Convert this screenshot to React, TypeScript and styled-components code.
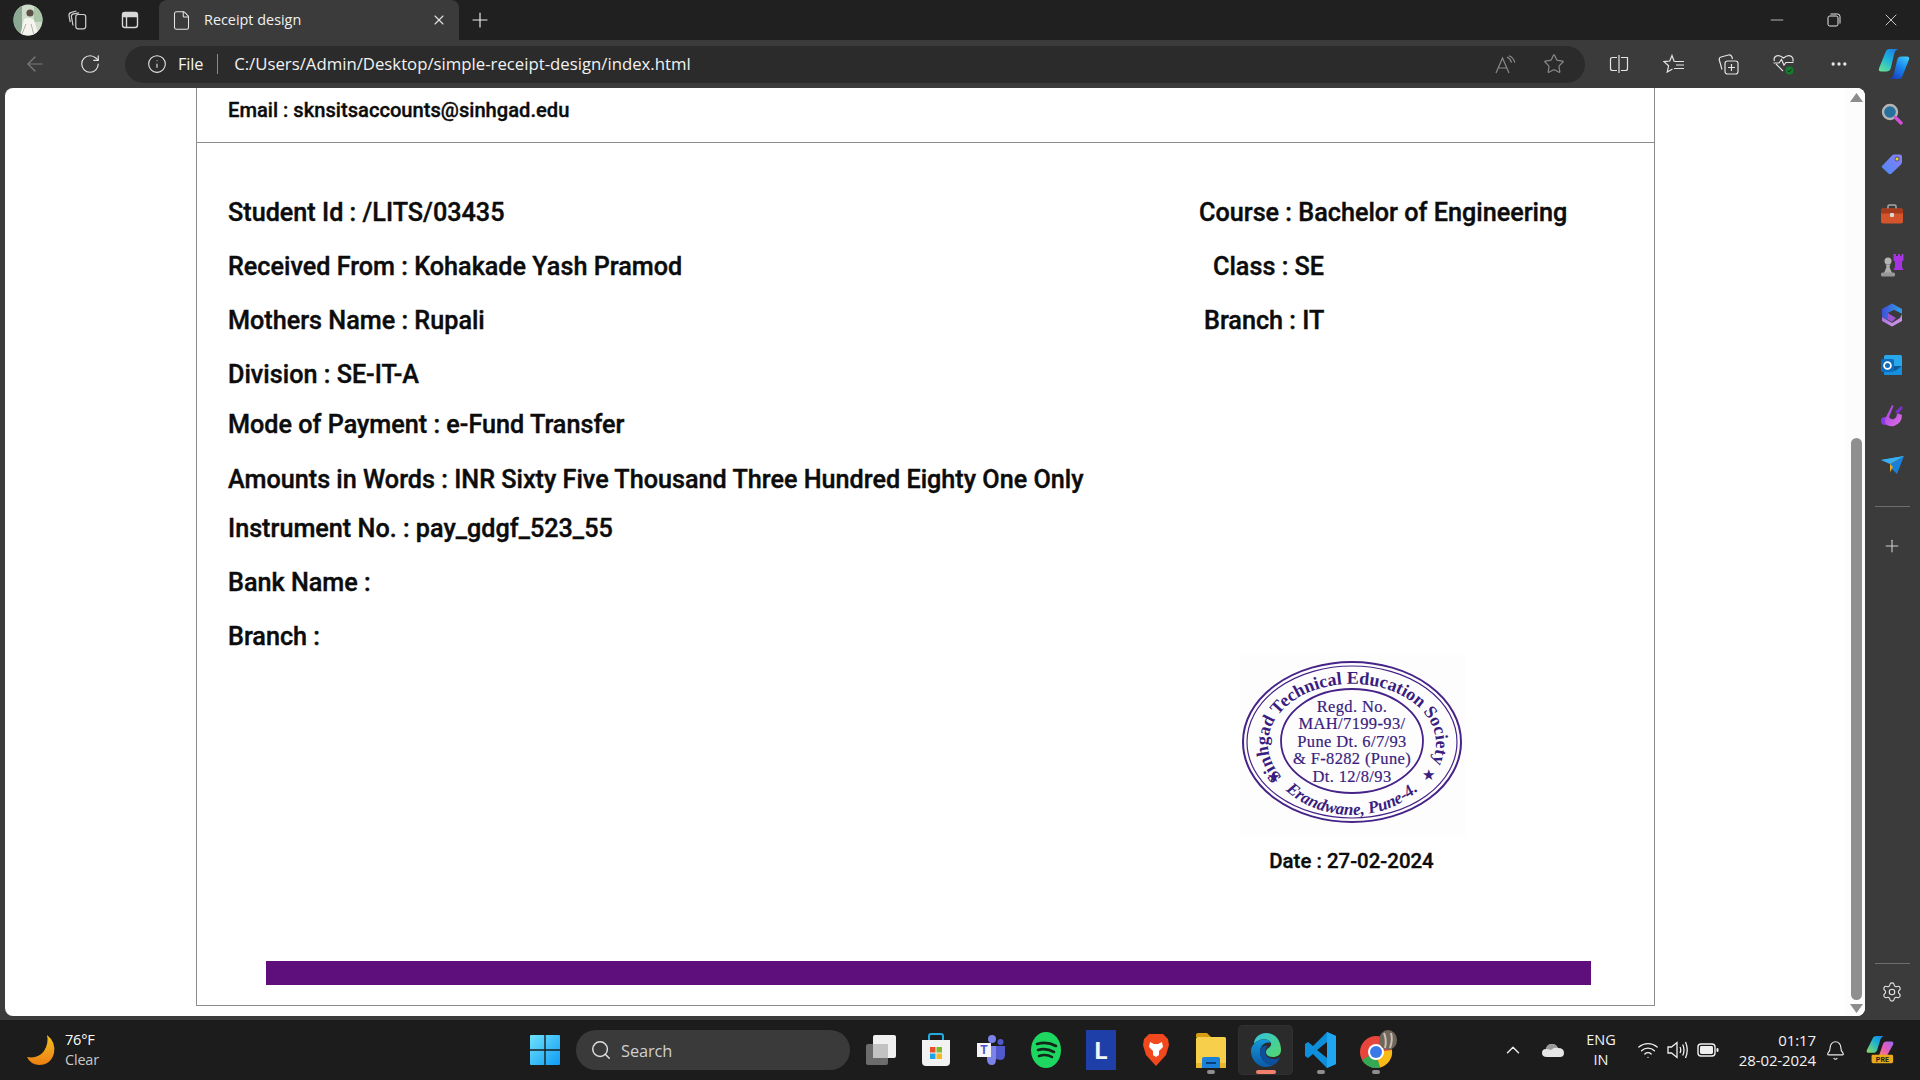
import React from "react";
import styled, { createGlobalStyle } from "styled-components";
import {
  ArrowLeft, RotateCw, Info, Star, Plus, X, Minus, ChevronUp, Bell, Settings,
  Wifi, Search, Ellipsis, File as FileGlyph,
} from "lucide-react";

const Global = createGlobalStyle`
  html, body { margin: 0; padding: 0; background: #1c1c1c; }
  * { box-sizing: border-box; }
  #root { width: 1920px; height: 1080px; overflow: hidden; }
`;

const Screen = styled.div`
  width: 1920px; height: 1080px; display: flex; flex-direction: column;
  font-family: "Open Sans", "Noto Sans", sans-serif; color: #fff; background: #3b3b3b;
`;

/* ---- title bar ---- */
const TitleBar = styled.div`
  height: 40px; background: #202020; display: flex; align-items: center; flex: none;
`;
const TitleSlot = styled.div<{ $w: number }>`
  width: ${(p) => p.$w}px; height: 40px; display: flex; align-items: center; justify-content: center; flex: none;
`;
const Tab = styled.div`
  width: 300px; height: 40px; background: #3b3b3b; border-radius: 8px 8px 0 0;
  display: flex; align-items: center; padding: 0 12px 0 12px; flex: none;
`;
const TabTitle = styled.span`
  font-size: 14.4px; margin: 0 0 2px 12px; flex: 1; color: #f0f0f0; letter-spacing: 0;
`;
const WindowControls = styled.div`
  margin-left: auto; display: flex; align-items: center; height: 40px; padding-right: 1px;
`;
const WinBtn = styled.div`
  width: 57px; height: 40px; display: flex; align-items: center; justify-content: center;
`;

/* ---- toolbar ---- */
const Toolbar = styled.div`
  height: 48px; background: #3b3b3b; display: flex; align-items: center; padding-left: 7px; flex: none;
`;
const ToolBtn = styled.div<{ $w?: number }>`
  width: ${(p) => p.$w ?? 55}px; height: 48px; display: flex; align-items: center; justify-content: center; flex: none;
`;
const AddressBar = styled.div`
  width: 1460px; height: 37px; margin: 0 6px 0 8px; border-radius: 19px; background: #2b2b2b;
  display: flex; align-items: center; padding-left: 22px; flex: none;
`;
const FileLabel = styled.span`
  font-size: 16.4px; margin: 0 0 2px 11px; color: #f2f2f2; letter-spacing: -0.2px;
`;
const Sep = styled.span`
  width: 1px; height: 20px; background: #8a8a8a; margin: 0 16px 0 14px;
`;
const Url = styled.span`
  font-size: 16.75px; margin-bottom: 2px; color: #f2f2f2; letter-spacing: 0; flex: 1; white-space: nowrap;
`;
const AddressEnd = styled.div`
  display: flex; align-items: center; gap: 27px; padding-right: 20px;
`;

/* ---- main ---- */
const Main = styled.div`
  flex: 1; display: flex; padding-left: 5px; padding-bottom: 4px; min-height: 0;
`;
const Page = styled.div`
  width: 1860px; background: #fff; border-radius: 8px; display: flex; overflow: hidden; flex: none; color: #0c0c0c;
  font-family: Roboto, "Liberation Sans", sans-serif;
`;
const Viewport = styled.div`
  flex: 1; padding-left: 191px; min-width: 0;
`;
const Receipt = styled.div`
  width: 1459px; height: 918px; border: 1px solid #8c8c8c; border-top: 0; background: #fff;
`;
const EmailBar = styled.div`
  height: 55px; border-bottom: 1px solid #8c8c8c; padding: 6px 0 0 31px;
  font-size: 20.15px; font-weight: 500; line-height: 32px; -webkit-text-stroke: 0.35px #0c0c0c;
`;
const Body = styled.div`
  padding: 55px 0 0 31px;
`;
const Line = styled.div<{ $gap?: number }>`
  display: flex; height: 30px; line-height: 30px; margin-top: ${(p) => p.$gap ?? 24}px;
  font-size: 25.2px; font-weight: 500; white-space: nowrap; -webkit-text-stroke: 0.4px #0c0c0c;
  &:first-child { margin-top: 0; }
`;
const LeftCell = styled.div`
  width: 971px; flex: none;
`;
const RightCell = styled.div<{ $indent?: number }>`
  padding-left: ${(p) => p.$indent ?? 0}px;
`;
const Signature = styled.div`
  width: 226px; margin: 3px 0 0 1012px; display: flex; flex-direction: column; align-items: center;
`;
const StampSvg = styled.svg`
  width: 226px; height: 180px; display: block; background: #fefdfe;
`;
const DateText = styled.div`
  margin: 13px 3px 0 0; height: 26px; line-height: 26px; font-size: 20.45px; font-weight: 500; white-space: nowrap;
  -webkit-text-stroke: 0.35px #0c0c0c;
`;
const PurpleBar = styled.div`
  width: 1325px; height: 24px; margin: 87px 0 0 38px; background: #5f0f7c;
`;

const ScrollCol = styled.div`
  width: 19px; flex: none; background: #fcfcfc; display: flex; flex-direction: column; align-items: center;
  padding: 5px 0 3px 1px; margin-left: auto;
`;
const ScrollSpacer = styled.div`
  height: 336px; flex: none;
`;
const Thumb = styled.div`
  width: 11px; flex: 1; background: #8f8f8f; border-radius: 6px; margin-bottom: 4px;
`;

/* ---- sidebar ---- */
const SideBar = styled.div`
  width: 55px; flex: none; display: flex; flex-direction: column; align-items: center; padding: 1px 1px 0 0;
`;
const SideIcon = styled.div`
  width: 50px; height: 50.2px; flex: none; display: flex; align-items: center; justify-content: center;
`;
const SideRule = styled.div`
  width: 35px; height: 1px; background: #6e6e6e; flex: none; margin-top: 15px;
`;
const SideAdd = styled.div`
  height: 40px; margin-top: 19px; display: flex; align-items: center; justify-content: center; flex: none;
`;
const SideGear = styled.div`
  margin-top: 13px; height: 30px; display: flex; align-items: center; justify-content: center; flex: none;
`;
const SideGap = styled.div`
  flex: 1;
`;
const SideFoot = styled.div`
  flex: 0 0 9px;
`;

/* ---- taskbar ---- */
const Taskbar = styled.div`
  height: 60px; background: #1c1c1c; flex: none; display: flex; align-items: center;
`;
const Weather = styled.div`
  width: 530px; flex: none; display: flex; align-items: center; padding-left: 26px;
`;
const WeatherText = styled.div`
  margin-left: 9px; font-size: 14.5px; line-height: 20px; letter-spacing: -0.2px;
`;
const WeatherSub = styled.div`
  color: #c8c8c8;
`;
const WinLogo = styled.div`
  width: 46px; flex: none; display: flex; align-items: center;
`;
const SearchPill = styled.div`
  width: 274px; height: 40px; border-radius: 20px; background: #3a3a3a; display: flex; align-items: center;
  padding-left: 14px; flex: none; margin-right: 3px;
`;
const SearchText = styled.span`
  font-size: 16.4px; color: #cfcfcf; margin-left: 9px; letter-spacing: -0.1px;
`;
const TaskIcon = styled.div<{ $active?: boolean }>`
  width: 55px; height: 50px; position: relative; display: flex; align-items: center; justify-content: center; flex: none;
  border-radius: 5px;
  ${(p) => p.$active && "background: #2b2b2b; box-shadow: inset 0 0 0 1px #303030;"}
`;
const Dot = styled.span<{ $color?: string; $w?: number }>`
  position: absolute; bottom: 1px; left: 50%; transform: translateX(-50%);
  width: ${(p) => p.$w ?? 8}px; height: 4px; border-radius: 2px; background: ${(p) => p.$color ?? "#8e8e8e"};
`;
const Tray = styled.div`
  margin-left: auto; display: flex; align-items: center; height: 60px; padding-right: 14px;
`;
const TraySlot = styled.div<{ $w: number }>`
  width: ${(p) => p.$w}px; display: flex; align-items: center; justify-content: center; flex: none;
`;
const LangText = styled.div`
  font-size: 14.5px; line-height: 20px; text-align: center; color: #f2f2f2;
`;
const Clock = styled.div`
  font-size: 15px; line-height: 20px; text-align: right; color: #f2f2f2; width: 92px; flex: none; letter-spacing: -0.1px;
`;

/* ---- drawings ---- */
const Avatar = () => (
  <svg width="30" height="32" viewBox="0 0 30 32">
    <clipPath id="av"><ellipse cx="15" cy="16" rx="14.5" ry="15.5" /></clipPath>
    <g clipPath="url(#av)">
      <rect width="30" height="32" fill="#cfdccb" />
      <rect x="0" width="9" height="32" fill="#8aa892" />
      <rect x="21" width="9" height="18" fill="#a9c4a6" />
      <circle cx="17" cy="9" r="3.6" fill="#5d4f45" />
      <path d="M7 32 L11 15 Q16 12 21 16 L26 32Z" fill="#f5f4ee" />
      <path d="M13 20 L9 30 M18 20 L21 31" stroke="#b4b2a6" strokeWidth="1" />
    </g>
  </svg>
);
const WorkspacesIcon = () => (
  <svg width="22" height="22" viewBox="0 0 20 20" fill="none" stroke="#d0d0d0" strokeWidth="1.1">
    <rect x="8" y="5" width="9" height="13" rx="2" />
    <path d="M5.5 15 L4 7 Q3.8 5 6 4.5 L11 3.5" />
    <path d="M3 12 L1.8 6 Q1.6 3.5 4 3 L8.5 1.8" />
  </svg>
);
const TabsIcon = () => (
  <svg width="20" height="20" viewBox="0 0 20 20" fill="none" stroke="#d8d8d8" strokeWidth="1.4">
    <rect x="2.5" y="2.5" width="15" height="15" rx="2.5" />
    <path d="M3 4 Q3 3 4 3 H16 Q17 3 17 4 V6.5 H3Z" fill="#d8d8d8" />
    <path d="M6.5 6.5 V17" />
  </svg>
);
const RestoreIcon = () => (
  <svg width="14" height="14" viewBox="0 0 14 14" fill="none" stroke="#e8e8e8" strokeWidth="1">
    <rect x="1" y="3" width="10" height="10" rx="1.8" />
    <path d="M3.5 1 H10.5 Q13 1 13 3.5 V10.5" />
  </svg>
);
const ReadAloud = () => (
  <svg width="21" height="19" viewBox="0 0 21 19" fill="none" stroke="#8a8a8a" strokeWidth="1.2">
    <path d="M1 18 L7.5 3 L14 18 M3.5 13 H11.5" />
    <path d="M12 2 Q15.5 3.5 16.5 7.5 M14 0.8 Q18.5 2.5 19.8 7.5" />
  </svg>
);
const SplitIcon = () => (
  <svg width="20" height="20" viewBox="0 0 20 20" fill="none" stroke="#e4e4e4" strokeWidth="1.2">
    <path d="M8 3.5 H3.5 Q1.5 3.5 1.5 5.5 V14.5 Q1.5 16.5 3.5 16.5 H8" />
    <path d="M12 3.5 H18.5 V14.5 Q18.5 16.5 16.5 16.5 H12" />
    <path d="M10 1 V19" />
  </svg>
);
const FavIcon = () => (
  <svg width="22" height="20" viewBox="0 0 22 20" fill="none" stroke="#e4e4e4" strokeWidth="1.2">
    <path d="M11.2 7.5 L9 1.5 L6.8 7 L1 7.6 L5.6 11.8 L4.2 18 L9.5 15" />
    <path d="M11.2 7.5 H21 M13 11 H21 M11 14.5 H21" />
  </svg>
);
const CollectionIcon = () => (
  <svg width="21" height="21" viewBox="0 0 21 21" fill="none" stroke="#e4e4e4" strokeWidth="1.2">
    <rect x="7" y="7" width="13" height="13" rx="2.5" />
    <path d="M13.5 10 V17 M10 13.5 H17" />
    <path d="M4 15.5 L1.3 6 Q0.8 3.6 3 3 L10.5 1 Q13 .6 14 3 L14.5 5" />
  </svg>
);
const HeartIcon = () => (
  <svg width="24" height="24" viewBox="0 0 24 24" fill="none">
    <path d="M11 19 L4 12 M2.4 9 Q1.4 6.5 3.4 4.5 Q7 2 11.5 6 Q16 2 19.5 4.5 Q21.8 6.5 20.8 9.5" stroke="#e4e4e4" strokeWidth="1.2" />
    <path d="M1.5 11 H7 L9.5 7.5 L12 13 L14 10.5 H21.5" stroke="#e4e4e4" strokeWidth="1.2" />
    <circle cx="17.5" cy="18.5" r="4" fill="#167d2f" />
    <path d="M15.7 18.6 L17 19.9 L19.4 17.3" stroke="#0b2d10" strokeWidth="1" />
  </svg>
);
const Copilot = ({ size = 32 }: { size?: number }) => (
  <svg width={size} height={size} viewBox="0 0 30 30">
    <defs>
      <linearGradient id="cp1" x1="0.2" y1="1" x2="0.8" y2="0">
        <stop offset="0" stopColor="#5fe09a" /><stop offset="0.5" stopColor="#1fb6d8" /><stop offset="1" stopColor="#1a7fe8" />
      </linearGradient>
      <linearGradient id="cp2" x1="0.2" y1="1" x2="0.8" y2="0">
        <stop offset="0" stopColor="#1640c0" /><stop offset="0.6" stopColor="#1a8cf0" /><stop offset="1" stopColor="#3cc4fa" />
      </linearGradient>
    </defs>
    <path d="M7 4 Q8 1 11 1 H19 Q16 2 15 6 L12 19 Q11 22 8 22 H3 Q0 22 1 19Z" fill="url(#cp1)" />
    <path d="M23 26 Q22 29 19 29 H11 Q14 28 15 24 L18 11 Q19 8 22 8 H27 Q30 8 29 11Z" fill="url(#cp2)" />
  </svg>
);
const CopilotPre = () => (
  <svg width="30" height="30" viewBox="0 0 32 30">
    <defs>
      <linearGradient id="cq1" x1="0" y1="1" x2="1" y2="0">
        <stop offset="0" stopColor="#8fdc5a" /><stop offset="0.6" stopColor="#18b0d8" /><stop offset="1" stopColor="#1a7fe8" />
      </linearGradient>
      <linearGradient id="cq2" x1="0" y1="1" x2="1" y2="0">
        <stop offset="0" stopColor="#f5a23c" /><stop offset="0.5" stopColor="#e85cb8" /><stop offset="1" stopColor="#a066f0" />
      </linearGradient>
    </defs>
    <path d="M8 3 Q9 0 12 0 H20 Q17 1 16 5 L13 15 Q12 18 9 18 H4 Q1 18 2 15Z" fill="url(#cq1)" />
    <path d="M24 20 Q23 23 20 23 H12 Q15 22 16 18 L19 9 Q20 6 23 6 H28 Q31 6 30 9Z" fill="url(#cq2)" />
    <rect x="7" y="20" width="23" height="9" rx="1.5" fill="#e8a91a" />
    <text x="18.5" y="27.4" fontSize="7.5" fontWeight="700" fontFamily="Roboto, sans-serif" fill="#1c1c1c" textAnchor="middle">PRE</text>
  </svg>
);

const SideSearch = () => (
  <svg width="22" height="22" viewBox="0 0 22 22">
    <circle cx="9" cy="9" r="7" fill="#25709c" stroke="#b4b4b4" strokeWidth="2.4" />
    <path d="M14.5 14.5 L20 20" stroke="#d44fd8" strokeWidth="3.4" strokeLinecap="round" />
  </svg>
);
const SideTag = () => (
  <svg width="22" height="22" viewBox="0 0 22 22">
    <defs><linearGradient id="tg" x1="0" y1="1" x2="1" y2="0"><stop offset="0" stopColor="#4c8bf5" /><stop offset="1" stopColor="#8a7cf5" /></linearGradient></defs>
    <path d="M1 13 L11 2.5 Q12 1.5 13.5 1.5 H19 Q21 1.5 21 3.5 V9 Q21 10.5 20 11.5 L10.5 20.5 Q9 22 7.5 20.5 L1 14.5 Q.3 13.7 1 13Z" fill="url(#tg)" />
    <circle cx="16" cy="6" r="2" fill="#f3d117" stroke="#1f2f6e" strokeWidth=".7" />
  </svg>
);
const SideBox = () => (
  <svg width="24" height="20" viewBox="0 0 24 20">
    <path d="M8 5 V2.5 Q8 1 9.5 1 H14.5 Q16 1 16 2.5 V5" fill="none" stroke="#a8a8a8" strokeWidth="1.6" />
    <rect x="1" y="4.5" width="22" height="15" rx="2" fill="#d4552c" />
    <rect x="1" y="4.5" width="22" height="5" rx="1.5" fill="#a53a1c" />
    <rect x="10" y="9" width="4" height="4" rx="1" fill="#d8d8d8" />
  </svg>
);
const SideChess = () => (
  <svg width="24" height="24" viewBox="0 0 24 24">
    <path d="M14 1 H16 V3 H18 V1 H20 V3 H21.5 V1 H23.5 V7 L22 9 V14 L23.5 17 H13.5 L15 14 V9 L13.5 7 V1Z" fill="#a634e0" />
    <circle cx="8" cy="8" r="3.5" fill="#b4b4b4" />
    <path d="M5.5 11.5 H10.5 L9.5 14 L12 20 H4 L6.5 14Z" fill="#adadad" />
    <rect x="1" y="19.5" width="14" height="4" rx="1.5" fill="#989898" />
  </svg>
);
const SideM365 = () => (
  <svg width="22" height="24" viewBox="0 0 22 24">
    <defs>
      <linearGradient id="ms1" x1="0" y1="0" x2="1" y2="0"><stop offset="0" stopColor="#3f51d8" /><stop offset="1" stopColor="#2f9fe8" /></linearGradient>
      <linearGradient id="ms2" x1="0" y1="0" x2="1" y2="1"><stop offset="0" stopColor="#a065e0" /><stop offset="1" stopColor="#d8a0e8" /></linearGradient>
    </defs>
    <path d="M1 6 L11 .5 L21 6 V11 L13 7 L7 10 V17 L1 14Z" fill="url(#ms1)" />
    <path d="M1 14 L11 20 L19 15 L21 11 V18 L11 23.5 L1 18Z" fill="url(#ms2)" />
    <path d="M7 10 L13 7 L21 11 L15 15 L7 11Z" fill="#3a3a3a" />
    <path d="M7 10 L7 17 L11 19 L15 15 L10 12Z" fill="#9a55d0" />
  </svg>
);
const SideOutlook = () => (
  <svg width="22" height="22" viewBox="0 0 22 22">
    <rect x="3" y="1" width="18" height="20" rx="1.5" fill="#28a8ea" />
    <path d="M3 12 H21 V20 Q21 21 20 21 H4 Q3 21 3 20Z" fill="#1490df" />
    <path d="M9 12 L21 12 L14 17Z" fill="#0a5a9c" />
    <rect x="0" y="5" width="13" height="13" rx="1.5" fill="#0f6cbd" />
    <circle cx="6.5" cy="11.5" r="3.4" fill="none" stroke="#fff" strokeWidth="1.8" />
  </svg>
);
const SideDrop = () => (
  <svg width="24" height="24" viewBox="0 0 24 24">
    <defs><linearGradient id="dp" x1="0" y1="0" x2="1" y2="1"><stop offset="0" stopColor="#a040e8" /><stop offset="1" stopColor="#e070e0" /></linearGradient></defs>
    <circle cx="5" cy="18" r="4" fill="#8a3ce0" />
    <path d="M5 16 L12 2 L13.5 3 L9 14 Q11 17 14 16 Q17 14.5 17 10 L22 12 Q22 20 14 23 Q8 24 5 20Z" fill="url(#dp)" />
    <path d="M15 9 L21 3 L23 5 L18 11Z" fill="#7a30c8" />
  </svg>
);
const SideSend = () => (
  <svg width="23" height="18" viewBox="0 0 23 18">
    <path d="M0 4 L23 0 L12 6Z" fill="#1f9bef" />
    <path d="M0 4 L9 8 L23 0Z" fill="#39b0f5" />
    <path d="M23 0 L9 8 L10 12Z" fill="#f5b21f" />
    <path d="M23 0 L16 18 L10 12 L9 16 L9 8Z" fill="#1a7fd8" />
    <path d="M9 8 L9 16 L12 11Z" fill="#f0a818" />
  </svg>
);

const Moon = () => (
  <svg width="30" height="32" viewBox="0 0 30 32">
    <defs><linearGradient id="mn" x1="0.5" y1="0" x2="0.5" y2="1"><stop offset="0" stopColor="#f2c21f" /><stop offset="1" stopColor="#ec7f14" /></linearGradient></defs>
    <path d="M21 1 Q30 8 28 19 Q25 31 13 31 Q4 30 1 23 Q12 25 18 17 Q23 9 21 1Z" fill="url(#mn)" />
  </svg>
);
const Windows = () => (
  <svg width="30" height="30" viewBox="0 0 30 30">
    <defs><linearGradient id="wn" x1="0" y1="0" x2="1" y2="1"><stop offset="0" stopColor="#6fe3fb" /><stop offset="1" stopColor="#0f9bf5" /></linearGradient></defs>
    <path d="M0 1 Q0 0 1 0 H14.3 V14.3 H0Z M15.7 0 H29 Q30 0 30 1 V14.3 H15.7Z M0 15.7 H14.3 V30 H1 Q0 30 0 29Z M15.7 15.7 H30 V29 Q30 30 29 30 H15.7Z" fill="url(#wn)" />
  </svg>
);
const TaskView = () => (
  <svg width="32" height="32" viewBox="0 0 32 32">
    <rect x="1" y="10" width="22" height="21" rx="2" fill="#6c6c6c" />
    <rect x="8" y="1" width="23" height="23" rx="2" fill="#f0f0f0" />
    <rect x="8" y="10" width="15" height="14" fill="#c2c2c2" />
  </svg>
);
const StoreIcon = () => (
  <svg width="30" height="34" viewBox="0 0 30 34">
    <path d="M8 8 V3 Q8 1 10 1 H20 Q22 1 22 3 V8" fill="none" stroke="#26a8e0" strokeWidth="2" />
    <path d="M1 7 H29 V29 Q29 33 25 33 H5 Q1 33 1 29Z" fill="#f2f2f2" />
    <rect x="9" y="14" width="5.5" height="5.5" fill="#e8502c" />
    <rect x="15.5" y="14" width="5.5" height="5.5" fill="#7fba2c" />
    <rect x="9" y="20.5" width="5.5" height="5.5" fill="#1fa3e8" />
    <rect x="15.5" y="20.5" width="5.5" height="5.5" fill="#f5b81f" />
  </svg>
);
const TeamsIcon = () => (
  <svg width="28" height="32" viewBox="0 0 28 32">
    <circle cx="15" cy="5" r="4" fill="#7b83eb" />
    <circle cx="23.5" cy="8" r="3" fill="#5059c9" />
    <path d="M10 12 H19 V25 Q19 31 15 31 Q10 31 10 25Z" fill="#7b83eb" />
    <path d="M19 12 H28 V21 Q28 26 23 26 L19 25Z" fill="#5059c9" />
    <rect x="0" y="9" width="14" height="14" fill="#f4f4f8" />
    <text x="7" y="20" fontSize="12" fontWeight="700" fontFamily="Roboto, sans-serif" fill="#4b53c8" textAnchor="middle">T</text>
  </svg>
);
const Spotify = () => (
  <svg width="30" height="36" viewBox="0 0 30 36">
    <ellipse cx="15" cy="18" rx="15" ry="18" fill="#1ed760" />
    <path d="M6 12 Q16 9 25 14 M7 18 Q15 15.5 23 20 M8 24 Q15 21.5 21 25" fill="none" stroke="#13261a" strokeWidth="2.6" strokeLinecap="round" />
  </svg>
);
const LIcon = () => (
  <svg width="30" height="40" viewBox="0 0 30 40">
    <rect width="30" height="40" fill="#1f3fa8" />
    <text x="15" y="29" fontSize="24" fontWeight="700" fontFamily="Roboto, sans-serif" fill="#f4f4f4" textAnchor="middle">L</text>
  </svg>
);
const Brave = () => (
  <svg width="28" height="34" viewBox="0 0 28 34">
    <path d="M7 1 H21 L26 6 L27 12 L24 22 L14 33 L4 22 L1 12 L2 6Z" fill="#f1481d" />
    <path d="M8 9 L12 11 H16 L20 9 L21 14 L17 18 V22 L14 24 L11 22 V18 L7 14Z" fill="#fff" />
  </svg>
);
const Folder = () => (
  <svg width="30" height="36" viewBox="0 0 30 36">
    <path d="M0 3 Q0 1 2 1 H11 L15 5 H0Z" fill="#d79e12" />
    <rect y="5" width="30" height="31" rx="1.5" fill="#f7cf4a" />
    <rect y="31" width="30" height="5" fill="#e8b82a" />
    <path d="M6 36 V27 Q6 25 8 25 H22 Q24 25 24 27 V36Z" fill="#1a80d8" />
    <rect x="10" y="30" width="10" height="2" fill="#0b3f78" />
  </svg>
);
const Edge = () => (
  <svg width="30" height="34" viewBox="0 0 30 34">
    <defs>
      <linearGradient id="ed1" x1="0" y1="0" x2="1" y2="1"><stop offset="0" stopColor="#32c4e0" /><stop offset="1" stopColor="#54d868" /></linearGradient>
      <linearGradient id="ed2" x1="0" y1="0" x2="0" y2="1"><stop offset="0" stopColor="#1598d8" /><stop offset="1" stopColor="#0b5aa8" /></linearGradient>
    </defs>
    <path d="M15 0 C25 0 30 8 30 17 C30 22 26 24 22 24 C18 24 15 22 15 19 C15 15 21 15 20 10 C18 5 8 5 3 11 C3 5 8 0 15 0Z" fill="url(#ed1)" />
    <path d="M3 11 C8 5 18 5 20 10 C14 8 9 13 9 19 C9 26 15 32 22 32 C19 34 17 34 15 34 C6 34 0 26 0 18 C0 15 1 13 3 11Z" fill="url(#ed2)" />
    <path d="M9 19 C9 26 15 32 22 32 C25 31 28 28 29 24 C26 27 18 27 15 22 C14 18 14 15 17 13 C12 12 9 15 9 19Z" fill="#0d4f9c" />
  </svg>
);
const VSCode = () => (
  <svg width="31" height="36" viewBox="0 0 31 36">
    <path d="M22 0 L31 4 V32 L22 36 L8 22 L3 26 L0 24 V12 L3 10 L8 14Z M22 10 L12 18 L22 26Z" fill="#0e8fdc" />
    <path d="M22 0 L31 4 V32 L22 36Z" fill="#1ea7f0" />
  </svg>
);
const Chrome = () => (
  <svg width="44" height="40" viewBox="-6 0 44 40">
    <circle cx="16" cy="22" r="16" fill="#e8453c" />
    <path d="M16 22 L2 30 A16 16 0 0 0 20 37.5Z" fill="#34a853" />
    <path d="M16 22 L32 20 A16 16 0 0 1 20 37.5Z" fill="#f9bc15" />
    <circle cx="16" cy="22" r="8" fill="#fff" />
    <circle cx="16" cy="22" r="6" fill="#3b78e7" />
    <ellipse cx="28" cy="10" rx="9" ry="10" fill="#6f675c" />
    <path d="M24 3 Q27 10 25 18 M31 3 Q33 10 30 18" stroke="#c8bfb0" strokeWidth="2" fill="none" />
  </svg>
);
const Cloud = () => (
  <svg width="22" height="16" viewBox="0 0 22 16">
    <path d="M5 15 Q0 15 0 11 Q0 7 4 7 Q5 2 10 2 Q14 2 16 6 Q22 6 22 11 Q22 15 18 15Z" fill="#e6e6e6" />
    <path d="M4 7 Q5 2 10 2 Q14 2 16 6 Q12 5 9 8 Q6 7 4 7Z" fill="#9a9a9a" />
  </svg>
);
const Volume = () => (
  <svg width="22" height="20" viewBox="0 0 22 20" fill="none" stroke="#f0f0f0" strokeWidth="1.3">
    <path d="M1 7 H4.5 L10 2.5 V17.5 L4.5 13 H1Z" />
    <path d="M13 7 Q14.5 10 13 13 M15.7 4.5 Q18.3 10 15.7 15.5 M18.5 2 Q22 10 18.5 18" />
  </svg>
);
const Battery = () => (
  <svg width="22" height="14" viewBox="0 0 22 14">
    <rect x="1" y="1" width="17" height="12" rx="3" fill="none" stroke="#f0f0f0" strokeWidth="1.4" />
    <rect x="3" y="3" width="13" height="8" rx="1.4" fill="#f0f0f0" />
    <rect x="19.5" y="5" width="2" height="4" rx="1" fill="#f0f0f0" />
  </svg>
);
const ArrowMark = ({ up }: { up?: boolean }) => (
  <svg width="13" height="9" viewBox="0 0 13 9">
    <path d={up ? "M6.5 0 L13 9 H0Z" : "M0 0 H13 L6.5 9Z"} fill="#8c8c8c" />
  </svg>
);

const Stamp = () => (
  <StampSvg viewBox="0 0 226 180">
    <defs>
      <path id="topArc" d="M42 122 A84 60 0 1 1 182 122" />
      <path id="botArc" d="M31 116 A88 72 0 0 0 193 116" />
    </defs>
    <g fill="none" stroke="#452388">
      <ellipse cx="112" cy="87" rx="109" ry="80" strokeWidth="2" />
      <ellipse cx="112" cy="87" rx="105" ry="76" strokeWidth="1.2" />
      <ellipse cx="112" cy="86" rx="71" ry="52" strokeWidth="1.8" />
    </g>
    <g fill="#3a1d80" fontFamily="'Liberation Serif', serif">
      <text fontSize="18" fontWeight="700">
        <textPath href="#topArc">Sinhgad Technical Education Society</textPath>
      </text>
      <text fontSize="17" fontWeight="700" fontStyle="italic" textAnchor="middle">
        <textPath href="#botArc" startOffset="50%">Erandwane, Pune-4.</textPath>
      </text>
      <text x="33" y="127" fontSize="15" textAnchor="middle">★</text>
      <text x="188" y="125" fontSize="15" textAnchor="middle">★</text>
      <g fontSize="16.5" letterSpacing="0.35" textAnchor="middle" stroke="#3a1d80" strokeWidth="0.2">
        <text x="112" y="57">Regd. No.</text>
        <text x="112" y="74">MAH/7199-93/</text>
        <text x="112" y="92">Pune Dt. 6/7/93</text>
        <text x="112" y="109">&amp; F-8282 (Pune)</text>
        <text x="112" y="127">Dt. 12/8/93</text>
      </g>
    </g>
  </StampSvg>
);

const taskIcons = [
  { el: <TaskView /> },
  { el: <StoreIcon /> },
  { el: <TeamsIcon /> },
  { el: <Spotify /> },
  { el: <LIcon /> },
  { el: <Brave /> },
  { el: <Folder />, dot: true },
  { el: <Edge />, active: true },
  { el: <VSCode />, dot: true },
  { el: <Chrome />, dot: true },
];

export default function App() {
  return (
    <Screen>
      <Global />
      <TitleBar>
        <TitleSlot $w={56}><Avatar /></TitleSlot>
        <TitleSlot $w={44}><WorkspacesIcon /></TitleSlot>
        <TitleSlot $w={59}><TabsIcon /></TitleSlot>
        <Tab>
          <FileGlyph size={21} color="#e4e4e4" strokeWidth={1.2} />
          <TabTitle>Receipt design</TabTitle>
          <X size={16} color="#e4e4e4" strokeWidth={1.6} />
        </Tab>
        <TitleSlot $w={42}><Plus size={24} color="#eaeaea" strokeWidth={1.2} /></TitleSlot>
        <WindowControls>
          <WinBtn><Minus size={20} color="#e8e8e8" strokeWidth={0.9} /></WinBtn>
          <WinBtn><RestoreIcon /></WinBtn>
          <WinBtn><X size={20} color="#e8e8e8" strokeWidth={1} /></WinBtn>
        </WindowControls>
      </TitleBar>

      <Toolbar>
        <ToolBtn><ArrowLeft size={24} color="#7d7d7d" strokeWidth={1.2} /></ToolBtn>
        <ToolBtn><RotateCw size={22} color="#e4e4e4" strokeWidth={1.3} /></ToolBtn>
        <AddressBar>
          <Info size={20} color="#e8e8e8" strokeWidth={1.3} />
          <FileLabel>File</FileLabel>
          <Sep />
          <Url>C:/Users/Admin/Desktop/simple-receipt-design/index.html</Url>
          <AddressEnd>
            <ReadAloud />
            <Star size={22} color="#8a8a8a" strokeWidth={1.3} />
          </AddressEnd>
        </AddressBar>
        <ToolBtn><SplitIcon /></ToolBtn>
        <ToolBtn><FavIcon /></ToolBtn>
        <ToolBtn><CollectionIcon /></ToolBtn>
        <ToolBtn><HeartIcon /></ToolBtn>
        <ToolBtn><Ellipsis size={20} color="#e8e8e8" strokeWidth={2} /></ToolBtn>
        <ToolBtn><Copilot /></ToolBtn>
      </Toolbar>

      <Main>
        <Page>
          <Viewport>
            <Receipt>
              <EmailBar>Email : sknsitsaccounts@sinhgad.edu</EmailBar>
              <Body>
                <Line>
                  <LeftCell>Student Id : /LITS/03435</LeftCell>
                  <RightCell>Course : Bachelor of Engineering</RightCell>
                </Line>
                <Line>
                  <LeftCell>Received From : Kohakade Yash Pramod</LeftCell>
                  <RightCell $indent={14}>Class : SE</RightCell>
                </Line>
                <Line>
                  <LeftCell>Mothers Name : Rupali</LeftCell>
                  <RightCell $indent={5}>Branch : IT</RightCell>
                </Line>
                <Line><LeftCell>Division : SE-IT-A</LeftCell></Line>
                <Line $gap={20}><LeftCell>Mode of Payment : e-Fund Transfer</LeftCell></Line>
                <Line $gap={25}><LeftCell>Amounts in Words : INR Sixty Five Thousand Three Hundred Eighty One Only</LeftCell></Line>
                <Line $gap={19}><LeftCell>Instrument No. : pay_gdgf_523_55</LeftCell></Line>
                <Line><LeftCell>Bank Name :</LeftCell></Line>
                <Line><LeftCell>Branch :</LeftCell></Line>
                <Signature>
                  <Stamp />
                  <DateText>Date : 27-02-2024</DateText>
                </Signature>
                <PurpleBar />
              </Body>
            </Receipt>
          </Viewport>
          <ScrollCol>
            <ArrowMark up />
            <ScrollSpacer />
            <Thumb />
            <ArrowMark />
          </ScrollCol>
        </Page>
        <SideBar>
          <SideIcon><SideSearch /></SideIcon>
          <SideIcon><SideTag /></SideIcon>
          <SideIcon><SideBox /></SideIcon>
          <SideIcon><SideChess /></SideIcon>
          <SideIcon><SideM365 /></SideIcon>
          <SideIcon><SideOutlook /></SideIcon>
          <SideIcon><SideDrop /></SideIcon>
          <SideIcon><SideSend /></SideIcon>
          <SideRule />
          <SideAdd><Plus size={20} color="#cfcfcf" strokeWidth={1.3} /></SideAdd>
          <SideGap />
          <SideRule />
          <SideGear><Settings size={22} color="#e8e8e8" strokeWidth={1.2} /></SideGear>
          <SideFoot />
        </SideBar>
      </Main>

      <Taskbar>
        <Weather>
          <Moon />
          <WeatherText>
            76°F
            <WeatherSub>Clear</WeatherSub>
          </WeatherText>
        </Weather>
        <WinLogo><Windows /></WinLogo>
        <SearchPill>
          <Search size={22} color="#e0e0e0" strokeWidth={1.6} />
          <SearchText>Search</SearchText>
        </SearchPill>
        {taskIcons.map((t, i) => (
          <TaskIcon key={i} $active={t.active}>
            {t.el}
            {t.dot && <Dot />}
            {t.active && <Dot $color="#f2806a" $w={20} />}
          </TaskIcon>
        ))}
        <Tray>
          <TraySlot $w={46}><ChevronUp size={22} color="#eaeaea" strokeWidth={1.6} /></TraySlot>
          <TraySlot $w={34}><Cloud /></TraySlot>
          <TraySlot $w={62}><LangText>ENG<br />IN</LangText></TraySlot>
          <TraySlot $w={32}><Wifi size={22} color="#f0f0f0" strokeWidth={1.4} /></TraySlot>
          <TraySlot $w={28}><Volume /></TraySlot>
          <TraySlot $w={32}><Battery /></TraySlot>
          <Clock>01:17<br />28-02-2024</Clock>
          <TraySlot $w={38}><Bell size={21} color="#eaeaea" strokeWidth={1.3} /></TraySlot>
          <TraySlot $w={52}><CopilotPre /></TraySlot>
        </Tray>
      </Taskbar>
    </Screen>
  );
}
